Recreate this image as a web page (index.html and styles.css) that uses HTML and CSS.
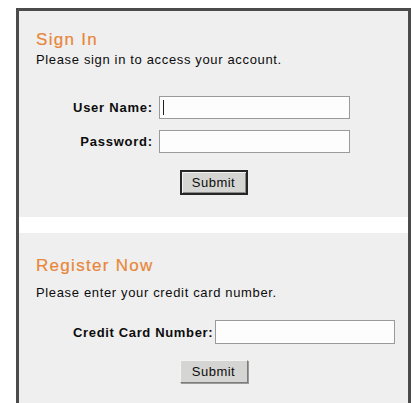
FILE: index.html
```html
<!DOCTYPE html>
<html lang="en">
<head>
<meta charset="utf-8">
<title>Sign In</title>
<link rel="stylesheet" href="styles.css">
</head>
<body>
<div class="panel">
  <section class="block block-signin">
    <h2 class="block-title">Sign In</h2>
    <p class="block-text">Please sign in to access your account.</p>
    <div class="form-grid form-grid-signin">
      <label class="field-label" for="user">User Name:</label>
      <span class="field"><input class="field-input input-user" id="user" type="text"><span class="caret"></span></span>
      <label class="field-label" for="pass">Password:</label>
      <span class="field"><input class="field-input input-user" id="pass" type="password"></span>
    </div>
    <div class="actions actions-signin">
      <button class="btn btn-default" type="button">Submit</button>
    </div>
  </section>
  <div class="divider"></div>
  <section class="block block-register">
    <h2 class="block-title">Register Now</h2>
    <p class="block-text">Please enter your credit card number.</p>
    <div class="form-grid form-grid-register">
      <label class="field-label" for="card">Credit Card Number:</label>
      <span class="field"><input class="field-input input-card" id="card" type="text"></span>
    </div>
    <div class="actions actions-register">
      <button class="btn" type="button">Submit</button>
    </div>
  </section>
</div>
</body>
</html>
```

FILE: styles.css
```css
html, body {
  margin: 0;
  padding: 0;
  background: #ffffff;
}

body {
  font-family: "Liberation Sans", Arial, sans-serif;
  color: #0c0c0c;
  height: 403px;
  overflow: hidden;
}

.panel {
  margin: 8px 7px 0 16px;
  border: 3px solid #4b4b4b;
  border-bottom: none;
  background: #ffffff;
}

.block {
  background: #efefef;
  padding-left: 17px;
}

.block-signin {
  padding-top: 19px;
  padding-bottom: 22px;
}

.block-register {
  padding-top: 23px;
  padding-bottom: 40px;
}

.divider {
  height: 16px;
  background: #ffffff;
}

.block-title {
  margin: 0;
  font-size: 17px;
  line-height: 20px;
  font-weight: normal;
  letter-spacing: 1.3px;
  color: #e8863a;
  -webkit-text-stroke: 0.2px #e8863a;
}

.block-text {
  margin: 2px 0 0;
  font-size: 13px;
  line-height: 16px;
  letter-spacing: 0.65px;
}

.block-register .block-text {
  margin-top: 9px;
}

.form-grid {
  display: grid;
  grid-template-columns: auto auto;
  justify-content: start;
  align-items: center;
  margin-left: 37px;
  row-gap: 11px;
}

.form-grid-signin {
  margin-top: 28px;
  column-gap: 6px;
}

.form-grid-register {
  margin-top: 19px;
  column-gap: 2px;
}

.field-label {
  text-align: right;
  font-size: 13px;
  font-weight: bold;
  letter-spacing: 0.75px;
}

.form-grid-register .field-label {
  letter-spacing: 0.65px;
}

.field {
  position: relative;
  display: block;
}

.field-input {
  display: block;
  box-sizing: border-box;
  height: 23px;
  margin: 0;
  padding: 0 4px;
  border: 1px solid #9a9a9a;
  background: #fdfdfd;
  font: 13px "Liberation Sans", Arial, sans-serif;
  outline: none;
}

.input-user {
  width: 191px;
}

.input-card {
  width: 180px;
  height: 24px;
}

.caret {
  position: absolute;
  left: 4px;
  top: 4px;
  width: 1px;
  height: 15px;
  background: #202020;
}

.actions {
  display: flex;
  justify-content: center;
  padding-right: 17px;
}

.actions-signin {
  margin-top: 17px;
}

.actions-register {
  margin-top: 16px;
}

.btn {
  box-sizing: border-box;
  width: 68px;
  height: 23px;
  margin: 0;
  padding: 0;
  font: 13px "Liberation Sans", Arial, sans-serif;
  letter-spacing: 0.5px;
  color: #0c0c0c;
  background: #d5d5d3;
  border: 1px solid;
  border-color: #f4f4f4 #7c7c7c #7c7c7c #f4f4f4;
  box-shadow: 1px 1px 0 #9b9b9b;
}

.btn-default {
  height: 25px;
  border: 2px solid #262626;
  box-shadow: inset 1px 1px 0 #f2f2f2, inset -1px -1px 0 #8a8a8a;
}
```
